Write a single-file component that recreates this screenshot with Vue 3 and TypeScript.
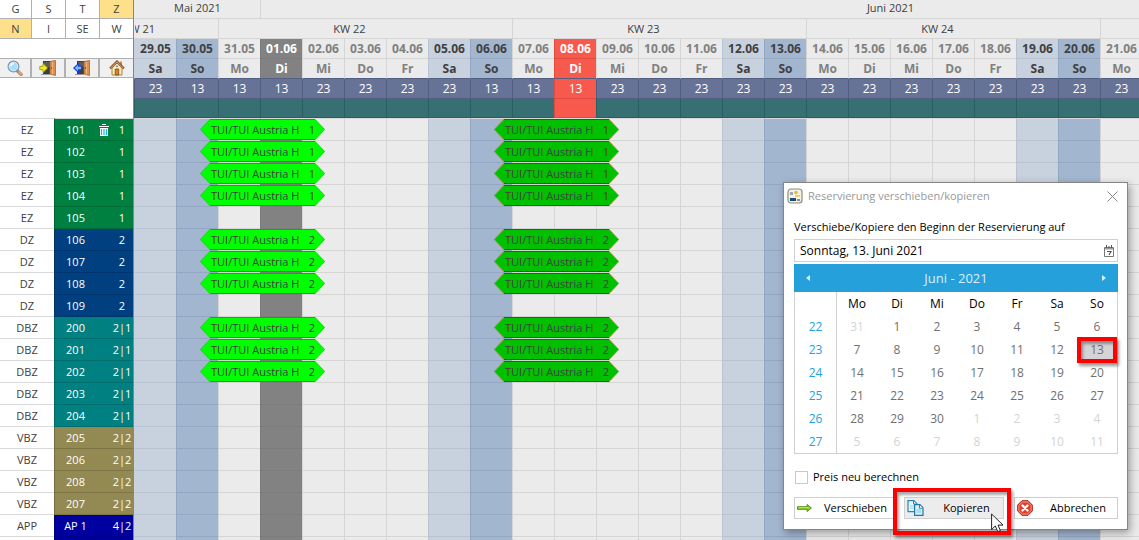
<script setup lang="ts">
import { ref } from 'vue'

interface Day { date: string; name: string; kind: string; count: number }
interface Room { type: string; no: string; beds: string; tone: string; booked: boolean }

const names = ['So', 'Mo', 'Di', 'Mi', 'Do', 'Fr', 'Sa']
const lowDays = [1, 2, 3, 8, 9, 10]

const days: Day[] = Array.from({ length: 33 }, (_, i) => {
  const d = new Date(2021, 4, 29 + i)
  const pad = (n: number) => String(n).padStart(2, '0')
  const wd = d.getDay()
  let kind = wd === 6 ? 'sat' : wd === 0 ? 'sun' : 'work'
  if (i === 3) kind = 'mark'
  if (i === 10) kind = 'now'
  return {
    date: `${pad(d.getDate())}.${pad(d.getMonth() + 1)}`,
    name: names[wd],
    kind,
    count: lowDays.includes(i) ? 13 : 23,
  }
})

const weeks = [
  { label: 'KW 22', span: 7 },
  { label: 'KW 23', span: 7 },
  { label: 'KW 24', span: 7 },
  { label: 'KW 25', span: 7 },
  { label: 'KW 26', span: 3 },
]

const room = (type: string, no: string, beds: string, tone: string, booked = false): Room => ({ type, no, beds, tone, booked })
const rooms: Room[] = [
  room('EZ', '101', '1', 'green', true),
  room('EZ', '102', '1', 'green', true),
  room('EZ', '103', '1', 'green', true),
  room('EZ', '104', '1', 'green', true),
  room('EZ', '105', '1', 'green'),
  room('DZ', '106', '2', 'blue', true),
  room('DZ', '107', '2', 'blue', true),
  room('DZ', '108', '2', 'blue', true),
  room('DZ', '109', '2', 'blue'),
  room('DBZ', '200', '2|1', 'teal', true),
  room('DBZ', '201', '2|1', 'teal', true),
  room('DBZ', '202', '2|1', 'teal', true),
  room('DBZ', '203', '2|1', 'teal'),
  room('DBZ', '204', '2|1', 'teal'),
  room('VBZ', '205', '2|2', 'olive'),
  room('VBZ', '206', '2|2', 'olive'),
  room('VBZ', '208', '2|2', 'olive'),
  room('VBZ', '207', '2|2', 'olive'),
  room('APP', 'AP 1', '4|2', 'navy'),
  room('', '', '', 'navy'),
]

const filters = [
  [{ t: 'G', on: false }, { t: 'S', on: false }, { t: 'T', on: false }, { t: 'Z', on: true }],
  [{ t: 'N', on: true }, { t: 'I', on: false }, { t: 'SE', on: false }, { t: 'W', on: false }],
]

const monthRows = Array.from({ length: 6 }, (_, r) => ({
  week: 22 + r,
  cells: Array.from({ length: 7 }, (_, c) => {
    const n = r * 7 + c
    return { day: n === 0 ? 31 : n > 30 ? n - 30 : n, other: n === 0 || n > 30, selected: n === 13 }
  }),
}))

const dateText = ref('Sonntag, 13. Juni 2021')
const recalc = ref(false)
</script>

<template>
  <div class="app">
    <aside class="side">
      <div class="tools">
        <div v-for="(row, i) in filters" :key="i" class="filter-row">
          <button v-for="f in row" :key="f.t" type="button" :class="['filter', { on: f.on }]">{{ f.t }}</button>
        </div>
        <div class="icon-row">
          <button type="button" class="tool" aria-label="Suchen">
            <svg width="16" height="16" viewBox="0 0 16 16">
              <path d="M10 10.500l4.200 4" stroke="#8a8a8a" stroke-width="3.200" stroke-linecap="round" />
              <path d="M12 12l2.200 2.300" stroke="#e9a15c" stroke-width="2.200" stroke-linecap="round" />
              <circle cx="6.500" cy="6.500" r="5.300" fill="#a9dcf8" stroke="#7d97ac" stroke-width="1.400" />
              <circle cx="6.500" cy="6.500" r="4.300" fill="none" stroke="#e8f6ff" stroke-width=".8" />
              <path d="M3.800 6.200a3 3 0 0 1 3-2.500" stroke="#fff" stroke-width="1.300" fill="none" />
            </svg>
          </button>
          <button type="button" class="tool" aria-label="Anreise">
            <svg width="18" height="16" viewBox="0 0 18 16">
              <path d="M4 1h8v13H4z" fill="#3d3d3d" /><path d="M5 2h6v5H5z" fill="#5c5c5c" />
              <path d="M11 1.500L16.500.500v15L11 14z" fill="#d9924f" stroke="#a5642e" stroke-width=".8" />
              <path d="M13.500 2v12" stroke="#efb078" /><circle cx="12.500" cy="8" r=".7" fill="#6b3d12" />
              <path d="M2 14.500h9" stroke="#9a9a9a" />
              <path d="M.8 6.300H4V3.500L8.600 8 4 12.500V9.700H.8z" fill="#f5ec1e" stroke="#a6a004" stroke-width=".9" />
            </svg>
          </button>
          <button type="button" class="tool" aria-label="Abreise">
            <svg width="18" height="16" viewBox="0 0 18 16">
              <path d="M4 1h8v13H4z" fill="#3d3d3d" /><path d="M5 2h6v5H5z" fill="#5c5c5c" />
              <path d="M11 1.500L16.500.500v15L11 14z" fill="#d9924f" stroke="#a5642e" stroke-width=".8" />
              <path d="M13.500 2v12" stroke="#efb078" /><circle cx="12.500" cy="8" r=".7" fill="#6b3d12" />
              <path d="M2 14.500h9" stroke="#9a9a9a" />
              <path d="M8.600 6.300H5.500V3.500L.8 8l4.700 4.500V9.700h3.100z" fill="#7db8ff" stroke="#1440d8" stroke-width="1.100" />
            </svg>
          </button>
          <button type="button" class="tool" aria-label="Start">
            <svg width="16" height="16" viewBox="0 0 16 16">
              <path d="M11 1.500h2V6h-2z" fill="#c98a5a" />
              <path d="M3 8l5-5 5 5v7H3z" fill="#fbe9b5" stroke="#9b7a35" stroke-width=".9" />
              <path d="M1 8.500l7-7 7 7" fill="none" stroke="#8a4a22" stroke-width="2.200" />
              <path d="M1.500 8.200L8 1.800l6.500 6.400" fill="none" stroke="#f0c88a" stroke-width=".8" />
              <path d="M6.300 9h3.400v6H6.300z" fill="#d9822b" stroke="#7a4312" stroke-width=".8" />
              <circle cx="8" cy="6.300" r="1" fill="#5b8fc9" />
            </svg>
          </button>
        </div>
      </div>
      <table class="rooms">
        <colgroup><col class="c-type" /><col class="c-no" /><col class="c-act" /><col class="c-bed" /></colgroup>
        <tbody>
          <tr v-for="(r, i) in rooms" :key="i">
            <td class="type">{{ r.type }}</td>
            <td :class="['no', r.tone]">{{ r.no }}</td>
            <td :class="r.tone">
              <svg v-if="i === 0" class="bin" width="10" height="12" viewBox="0 0 10 12">
                <path d="M3 0h4v1H3zM0 2h10v1H0zM1 4h8v8H1z" fill="#fff" />
                <path d="M2.500 5v6M5 5v6M7.500 5v6" stroke="#19b5d8" stroke-width="1.200" />
              </svg>
            </td>
            <td :class="r.tone">{{ r.beds }}</td>
          </tr>
        </tbody>
      </table>
    </aside>

    <main class="plan">
      <table class="grid">
        <thead>
          <tr class="months"><th colspan="3">Mai 2021</th><th colspan="30">Juni 2021</th></tr>
          <tr class="weeks">
            <th colspan="2" class="cut"><div class="tail">KW&nbsp;21</div></th>
            <th v-for="w in weeks" :key="w.label" :colspan="w.span">{{ w.label }}</th>
          </tr>
          <tr class="dates"><th v-for="d in days" :key="d.date" :class="d.kind">{{ d.date }}</th></tr>
          <tr class="dates"><th v-for="d in days" :key="d.date" :class="d.kind">{{ d.name }}</th></tr>
          <tr class="counts"><td v-for="d in days" :key="d.date" :class="d.kind">{{ d.count }}</td></tr>
          <tr class="band"><td v-for="d in days" :key="d.date" :class="d.kind"></td></tr>
        </thead>
        <tbody>
          <tr v-for="(r, i) in rooms" :key="i">
            <td v-for="(d, c) in days" :key="d.date" :class="d.kind">
              <div v-if="r.booked && (c === 1 || c === 8)" :class="['bar', c === 1 ? 'light' : 'dark']">
                <svg class="cap" width="10" height="21" viewBox="0 0 10 21"><path class="fill" d="M10 0L0 10.500L10 21z" /><path class="edge" d="M10 .500L.5 10.500L10 20.500" /></svg>
                <div class="mid"><span>TUI/TUI Austria H</span><span>{{ r.beds[0] }}</span></div>
                <svg class="cap" width="10" height="21" viewBox="0 0 10 21"><path class="fill" d="M0 0L10 10.500L0 21z" /><path class="edge" d="M0 .500L9.500 10.500L0 20.500" /></svg>
              </div>
            </td>
          </tr>
        </tbody>
      </table>
    </main>

    <form class="dialog" role="dialog" aria-labelledby="dlg-title" @submit.prevent>
      <header class="title">
        <svg width="16" height="16" viewBox="0 0 16 16">
          <rect x="1" y="1" width="14" height="14" rx="3" fill="#f4f1e6" stroke="#8c8c84" stroke-width="1.200" />
          <rect x="3" y="4" width="3" height="3" fill="#9aa9b5" /><circle cx="9" cy="4.500" r="1.800" fill="#e8b92c" />
          <path d="M8 7h5v2H8z" fill="#f0d060" /><path d="M3 10h6v3H3z" fill="#1d4a78" /><path d="M10 11h3v2h-3z" fill="#7c8f9e" />
        </svg>
        <h1 id="dlg-title">Reservierung verschieben/kopieren</h1>
        <button type="button" class="close" aria-label="Schließen">
          <svg width="11" height="11" viewBox="0 0 11 11"><path d="M.5.5l10 10M10.500.5l-10 10" stroke="#858585" /></svg>
        </button>
      </header>
      <div class="content">
        <label for="start" class="lead">Verschiebe/Kopiere den Beginn der Reservierung auf</label>
        <div class="field">
          <input id="start" v-model="dateText" type="text" />
          <button type="button" aria-label="Kalender öffnen">
            <svg width="10" height="12" viewBox="0 0 10 12">
              <path d="M.5 2.500h9v9h-9z" fill="#fff" stroke="#777" /><path d="M1 3h8v1.500H1z" fill="#999" />
              <path d="M2.500 0v3M5 1v2M7.500 0v3" stroke="#555" /><path d="M3 6.500h4L5 10" fill="none" stroke="#555" stroke-width="1.200" />
            </svg>
          </button>
        </div>
        <div class="cal-head">
          <button type="button" aria-label="Vorheriger Monat"><svg width="4" height="6" viewBox="0 0 4 6"><path d="M4 0v6L0 3z" fill="#d8f0fc" /></svg></button>
          <span>Juni - 2021</span>
          <button type="button" aria-label="Nächster Monat"><svg width="4" height="6" viewBox="0 0 4 6"><path d="M0 0v6l4-3z" fill="#d8f0fc" /></svg></button>
        </div>
        <table class="cal">
          <thead>
            <tr><th class="wk"></th><th v-for="n in ['Mo', 'Di', 'Mi', 'Do', 'Fr', 'Sa', 'So']" :key="n">{{ n }}</th></tr>
          </thead>
          <tbody>
            <tr v-for="row in monthRows" :key="row.week">
              <th class="wk">{{ row.week }}</th>
              <td v-for="(c, k) in row.cells" :key="k">
                <button type="button" :class="{ other: c.other, selected: c.selected }">{{ c.day }}</button>
                <div v-if="c.selected" class="ring day-ring"></div>
              </td>
            </tr>
          </tbody>
        </table>
        <label class="check"><input v-model="recalc" type="checkbox" /><span>Preis neu berechnen</span></label>
        <div class="actions">
          <button type="button" class="act">
            <svg width="17" height="16" viewBox="0 0 17 16"><path d="M.5 6.500h11V4L16.500 8l-5 4V9.500H.5z" fill="#8ed61e" stroke="#4c7d10" /><path d="M1.500 7.500h11" fill="none" stroke="#c8f27c" stroke-width=".8" /></svg>
            <span>Verschieben</span>
          </button>
          <div class="marked">
            <button type="submit" class="act hover">
              <svg width="17" height="16" viewBox="0 0 17 16">
                <path d="M1 .7h6l3 3v8H1z" fill="#e6f6fd" stroke="#2b86b5" stroke-width="1.200" /><path d="M6.500 1v3h3" fill="#fff" stroke="#2b86b5" />
                <path d="M3 6h5M3 8h5" stroke="#9bd0ec" />
                <path d="M7.600 4.700h5.400l3 3v7.600H7.600z" fill="#d5effb" stroke="#1f78a8" stroke-width="1.200" /><path d="M12.500 5v3.200h3.200" fill="#fff" stroke="#2b86b5" />
                <path d="M9.500 10h4.500M9.500 12h4.500" stroke="#84c3e6" />
              </svg>
              <span>Kopieren</span>
            </button>
            <div class="ring act-ring"></div>
            <svg class="cursor" width="13" height="20" viewBox="0 0 13 20"><path d="M.6 1v15.500l3.700-3.500 2.500 5.700 2.600-1.100L7 12.100h5z" fill="#fff" stroke="#222" /></svg>
          </div>
          <button type="button" class="act">
            <svg width="16" height="16" viewBox="0 0 16 16">
              <path d="M5 .7h6L15.300 5v6L11 15.300H5L.7 11V5z" fill="#e0402e" stroke="#a32417" /><path d="M5.400 1.900h5.200l3.500 3.500v5.200l-3.500 3.500H5.400l-3.500-3.500V5.400z" fill="none" stroke="#f6a095" stroke-width=".9" />
              <path d="M5.500 5.500l5 5M10.500 5.500l-5 5" stroke="#fff" stroke-width="2.200" stroke-linecap="round" />
            </svg>
            <span>Abbrechen</span>
          </button>
        </div>
      </div>
    </form>
  </div>
</template>

<style>
html, body { height: 100%; overflow: hidden; }
#app { height: 100%; }
</style>

<style scoped>
* { box-sizing: border-box; }
.app { position: relative; display: flex; height: 100%; overflow: hidden; background: #ebebeb; color: #404040; font: 11px/18px "Open Sans", "Noto Sans", sans-serif; }
button, input { font: inherit; color: inherit; margin: 0; padding: 0; border: 0; background: none; }
table { border-collapse: separate; border-spacing: 0; table-layout: fixed; }
th, td { padding: 0; font-weight: 400; text-align: center; white-space: nowrap; }

.side { flex: 0 0 134px; border-right: 1px solid #858585; background: #fff; }
.tools { display: flex; flex-direction: column; height: 118px; }
.filter-row, .icon-row { display: grid; grid-template-columns: 32px 34px 34px 1fr; }
.filter-row { border-bottom: 1px solid #b0b0b0; }
.filter, .tool { border-right: 1px solid #b0b0b0; }
.filter { height: 18px; line-height: 18px; }
.filter-row + .filter-row .filter { height: 19px; }
.filter:last-child, .tool:last-child { border-right: 0; }
.filter.on { background: #ffe08a; }
.icon-row { margin-top: 19px; border-top: 1px solid #b0b0b0; border-bottom: 1px solid #b0b0b0; background: #f0f0f0; }
.tool { display: flex; align-items: center; justify-content: center; height: 18px; border-right-width: 2px; }

.rooms { width: 100%; }
.c-type { width: 54px; }
.c-no { width: 42px; }
.c-act { width: 15px; }
.rooms td { height: 22px; line-height: 20px; border-bottom: 1px solid rgba(0, 0, 0, .15); color: #fff; }
.rooms tr:first-child td { height: 23px; border-top: 1px solid #d9d9d9; }
.rooms td.type { color: #404040; border-bottom-color: #d9d9d9; }
.rooms td.no { border-left: 1px solid rgba(0, 0, 0, .2); }
.green { background: #008040; }
.blue { background: #004080; }
.teal { background: #008080; }
.olive { background: #938953; }
.navy { background: #0000a0; }
.bin { display: block; margin: 0 auto; }

.plan { flex: 1; min-width: 0; overflow: hidden; }
.grid { width: 1386px; min-width: 100%; }
.grid th, .grid td { height: 20px; line-height: 18px; border-left: 1px solid #d5d5d5; border-bottom: 1px solid #d5d5d5; }
.grid tr > :first-child { border-left-color: transparent; }
.grid .months th { height: 19px; line-height: 15px; padding-bottom: 3px; }
.grid .weeks th { padding-right: 32px; }
.grid .weeks .cut { padding: 0; }
.tail { display: flex; justify-content: flex-end; width: 20px; overflow: hidden; }
.grid .dates th { font-size: 12px; font-weight: 700; color: #808080; }
.grid .sat { background: #c8d1de; border-color: #b9c3d1; }
.grid .sun { background: #a3b6d0; border-color: #93a7c3; }
.grid .mark { background: #828282; border-color: #7c7c7c; }
.grid .dates .sat, .grid .dates .sun { color: #404040; }
.grid .dates .mark, .grid .dates .now { color: #fff; }
.grid .dates .now, .grid .counts .now, .grid .band .now { background: #f7594d; border-color: #e04b41; }
.grid .counts td { font-size: 12px; background: #667396; border-color: #535f82; color: #fff; }
.grid .band td { height: 19px; background: #377072; border-color: #2b5e62; }
.grid .dates + .dates th { border-bottom-color: #535f82; }
.grid tbody td { position: relative; height: 22px; }
.grid tbody tr:first-child td { height: 23px; border-top: 1px solid #d9d9d9; }

.bar { position: absolute; z-index: 1; top: 0; left: 23px; display: flex; width: calc(300% + 2px); height: 21px; }
.cap { flex: none; }
.mid { flex: 1; display: flex; justify-content: space-between; padding: 0 0 0 1px; line-height: 19px; }
.light .mid { background: #0f0; border: solid #00b800; border-width: 1px 0; }
.light .fill { fill: #0f0; }
.light .edge { fill: none; stroke: #2fc92f; }
.dark .mid { background: #00c000; border: solid #f00000; border-width: 1px 0; }
.dark .fill { fill: #00c000; }
.dark .edge { fill: none; stroke: #e86a3c; }

.dialog { position: absolute; z-index: 2; top: 182px; right: 11px; width: 345px; border: 1px solid #858585; background: #fff; color: #000; box-shadow: 2px 3px 8px rgba(0, 0, 0, .35); }
.title { display: flex; align-items: center; gap: 5px; height: 26px; padding: 0 9px 0 3px; }
.title h1 { flex: 1; margin: 0; font-size: 11px; font-weight: 400; color: #999; }
.close { display: flex; }
.content { padding: 10px 9px 10px 10px; }
.lead { display: block; height: 20px; line-height: 16px; }
.field { display: flex; align-items: center; height: 23px; border: 1px solid #d0d0d0; padding: 0 3px 0 5px; }
.field input { flex: 1; min-width: 0; outline: 0; font-size: 12px; }
.field button, .cal-head button { display: flex; }
.cal-head { display: flex; align-items: center; justify-content: space-between; height: 28px; margin-top: 2px; padding: 0 12px; background: #26a0da; color: #d8f0fc; font-size: 13px; }
.cal { width: 100%; border: 1px solid #d0d0d0; border-top: 0; font-size: 12px; }
.cal th, .cal td { position: relative; height: 23px; line-height: 23px; }
.cal .wk { width: 42px; border-right: 1px solid #d0d0d0; color: #26a0da; }
.cal button { display: block; width: 100%; height: 23px; line-height: 23px; color: #707070; }
.cal button.other { color: #d3d3d3; }
.cal button.selected { width: 34px; height: 21px; line-height: 21px; margin: 0 auto; background: #d5d3d6; }
.ring { position: absolute; border: 4px solid #f00; box-shadow: 2px 3px 3px rgba(0, 0, 0, .4), inset 2px 3px 3px rgba(0, 0, 0, .35); pointer-events: none; }
.day-ring { left: 0; top: -1px; width: 40px; height: 26px; }
.check { display: flex; align-items: center; gap: 5px; height: 18px; margin: 14px 0 11px 1px; }
.check input { appearance: none; width: 13px; height: 13px; border: 1px solid #c8c8c8; background: #fff; }
.actions { display: grid; grid-template-columns: 100px 100px 1fr; gap: 10px; }
.act { display: flex; align-items: center; width: 100%; height: 22px; padding: 0 6px 0 2px; border: 1px solid #d0d0d0; }
.act span { flex: 1; text-align: center; padding-left: 12px; }
.act.hover { background: #ececec; }
.marked { position: relative; }
.act-ring { left: -11px; top: -9px; width: 118px; height: 47px; }
.cursor { position: absolute; left: 87px; top: 16px; }
</style>
